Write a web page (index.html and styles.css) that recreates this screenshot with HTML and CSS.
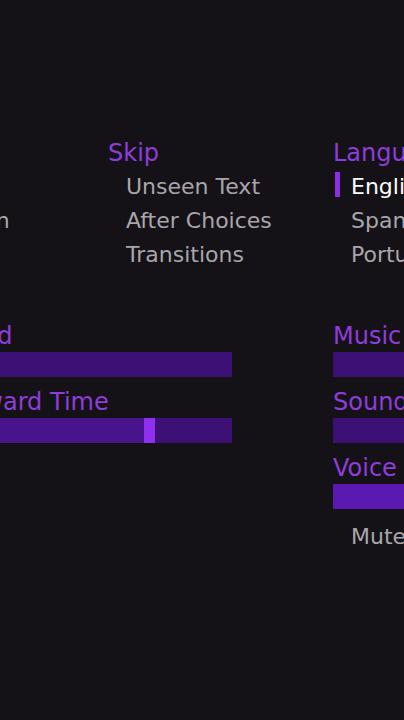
FILE: index.html
```html
<!DOCTYPE html>
<html>
<head>
<meta charset="utf-8">
<link rel="stylesheet" href="styles.css">
</head>
<body>
<div class="screen">
  <div class="row row-top">
    <div class="col col-display">
      <div class="label">Display</div>
      <div class="item selected">Window</div>
      <div class="item">Fullscreen</div>
    </div>
    <div class="col col-skip">
      <div class="label">Skip</div>
      <div class="item">Unseen Text</div>
      <div class="item">After Choices</div>
      <div class="item">Transitions</div>
    </div>
    <div class="col col-lang">
      <div class="label">Language</div>
      <div class="item selected">English</div>
      <div class="item">Spanish</div>
      <div class="item">Portuguese</div>
    </div>
  </div>
  <div class="row row-bars">
    <div class="col col-left">
      <div class="label">Text Speed</div>
      <div class="bar"><div class="fill" style="width:0%"></div></div>
      <div class="label">Auto-Forward Time</div>
      <div class="bar"><div class="fill" style="width:75%"></div><div class="thumb"></div></div>
    </div>
    <div class="col col-right">
      <div class="label">Music Volume</div>
      <div class="bar"><div class="fill" style="width:0%"></div></div>
      <div class="label">Sound Volume</div>
      <div class="bar"><div class="fill" style="width:0%"></div></div>
      <div class="label">Voice Volume</div>
      <div class="bar"><div class="fill full" style="width:100%"></div></div>
      <div class="item mute">Mute All</div>
    </div>
  </div>
</div>
</body>
</html>
```
FILE: styles.css
```css
html, body {
  margin: 0;
  padding: 0;
  width: 404px;
  height: 720px;
  overflow: hidden;
  background: #151217;
  font-family: "DejaVu Sans", sans-serif;
}
.screen {
  margin-left: -119px;
  padding-top: 137px;
  width: 900px;
}
.row {
  display: flex;
}
.row-bars {
  margin-top: 49px;
  gap: 101px;
}
.col {
  display: flex;
  flex-direction: column;
}
.col-display { width: 227px; }
.col-skip { width: 225px; }
.col-lang { width: 300px; }
.col-left, .col-right { width: 351px; }
.label {
  font-size: 24px;
  line-height: 32px;
  height: 30px;
  color: #8e3ddb;
  white-space: nowrap;
  margin-bottom: 2px;
}
.item {
  position: relative;
  font-size: 22px;
  line-height: 36px;
  height: 34px;
  color: #a9a6ab;
  padding-left: 18px;
  white-space: nowrap;
}
.item.selected { color: #ffffff; }
.item.selected::before {
  content: "";
  position: absolute;
  left: 2px;
  top: 3px;
  width: 5px;
  height: 25px;
  background: #8a2fe6;
}
.bar {
  position: relative;
  height: 25px;
  background: #3c1074;
  margin-bottom: 9px;
}
.fill {
  height: 100%;
  background: #48148c;
}
.fill.full { background: #5a1ab2; }
.thumb {
  position: absolute;
  left: 263px;
  top: 0;
  width: 11px;
  height: 25px;
  background: #902ff0;
}
.mute {
  margin-top: 1px;
}
```
